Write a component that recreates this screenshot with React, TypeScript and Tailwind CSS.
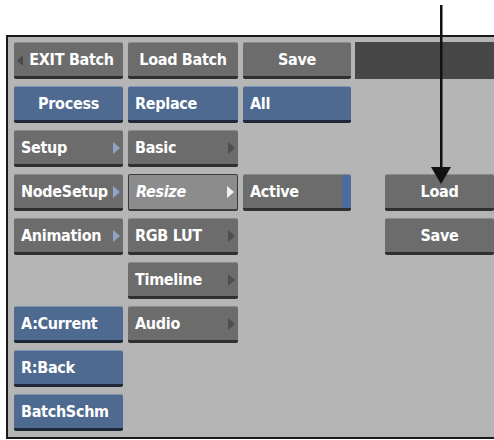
import type { ReactNode } from 'react'

type Variant = 'gray' | 'blue' | 'pressed'

const variants: Record<Variant, string> = {
  gray: 'bg-[#6c6c6c] border-t border-t-[#8a8a8a] border-b-[3px] border-b-[#2f2f2f]',
  blue: 'bg-[#4e6a90] border-t border-t-[#7d94b6] border-b-[3px] border-b-[#1e2838]',
  pressed: 'bg-[#8c8c8c] border border-[#3a3a3a] border-b-2',
}

const label = "text-white text-[16px] font-bold font-stretch-condensed font-['DejaVu_Sans_Condensed','DejaVu_Sans',sans-serif] tracking-[-0.3px]"

function Btn({
  children,
  variant = 'gray',
  center = false,
  arrow,
  italic = false,
  className = '',
}: {
  children?: ReactNode
  variant?: Variant
  center?: boolean
  arrow?: string
  italic?: boolean
  className?: string
}) {
  return (
    <div
      className={`relative flex items-center h-full rounded-[2px] ${label} ${variants[variant]} ${center ? 'justify-center' : 'pl-[7px]'} ${italic ? 'italic' : ''} ${className}`}
    >
      <span>{children}</span>
      {arrow && (
        <svg className="absolute right-[3px] top-[11px]" width="7" height="12" viewBox="0 0 7 12">
          <path d="M0 0 L7 6 L0 12 Z" fill={arrow} />
        </svg>
      )}
    </div>
  )
}

export default function App() {
  return (
    <div className="relative w-[494px] h-[440px] bg-white overflow-hidden pt-[35px] pl-[6px]">
      <div className="h-[404px] bg-[#b5b5b5] border-t-2 border-l-2 border-b-2 border-[#1a1a1a] pt-[5px] pl-[6px]">
        <div className="grid grid-cols-[109px_110px_108px_1fr] auto-rows-[37px] gap-x-[5px] gap-y-[7px]">
          {/* row 1 */}
          <Btn center className="col-start-1 row-start-1 pl-[6px]">
            <svg className="absolute left-[3px] top-[12px]" width="6" height="11" viewBox="0 0 6 11">
              <path d="M6 0 L0 5.5 L6 11 Z" fill="#4a4a4a" />
            </svg>
            EXIT Batch
          </Btn>
          <Btn center className="col-start-2 row-start-1">Load Batch</Btn>
          <Btn center className="col-start-3 row-start-1">Save</Btn>
          <div className="col-start-4 row-start-1 bg-[#474747] -ml-[1px]" />

          {/* row 2 */}
          <Btn variant="blue" center className="col-start-1 row-start-2">Process</Btn>
          <Btn variant="blue" className="col-start-2 row-start-2">Replace</Btn>
          <Btn variant="blue" className="col-start-3 row-start-2">All</Btn>

          {/* row 3 */}
          <Btn arrow="#8ea4c8" className="col-start-1 row-start-3">Setup</Btn>
          <Btn arrow="#4e4e4e" className="col-start-2 row-start-3">Basic</Btn>

          {/* row 4 */}
          <Btn arrow="#8ea4c8" className="col-start-1 row-start-4">NodeSetup</Btn>
          <Btn variant="pressed" italic arrow="#f2f2f2" className="col-start-2 row-start-4">Resize</Btn>
          <div className="col-start-3 row-start-4 flex h-full rounded-[2px] border-t border-t-[#8a8a8a] border-b-[3px] border-b-[#2f2f2f] overflow-hidden">
            <div className={`flex-1 bg-[#6c6c6c] flex items-center pl-[7px] ${label}`}>
              <span>Active</span>
            </div>
            <div className="w-[9px] bg-[#4d6c9e]" />
          </div>
          <div className="col-start-4 row-start-4 pl-[29px]">
            <Btn center>Load</Btn>
          </div>

          {/* row 5 */}
          <Btn arrow="#8ea4c8" className="col-start-1 row-start-5">Animation</Btn>
          <Btn arrow="#4e4e4e" className="col-start-2 row-start-5">RGB LUT</Btn>
          <div className="col-start-4 row-start-5 pl-[29px]">
            <Btn center>Save</Btn>
          </div>

          {/* row 6 */}
          <Btn arrow="#4e4e4e" className="col-start-2 row-start-6">Timeline</Btn>

          {/* row 7 */}
          <Btn variant="blue" className="col-start-1 row-start-7">A:Current</Btn>
          <Btn arrow="#4e4e4e" className="col-start-2 row-start-7">Audio</Btn>

          {/* rows 8-9 */}
          <Btn variant="blue" className="col-start-1 row-start-8">R:Back</Btn>
          <Btn variant="blue" className="col-start-1 row-start-9">BatchSchm</Btn>
        </div>
      </div>

      {/* annotation arrow */}
      <svg className="absolute left-[429px] top-[5px]" width="24" height="182" viewBox="0 0 24 182">
        <rect x="11" y="0" width="2.5" height="164" fill="#111" />
        <path d="M2 162 L22 162 L12 179 Z" fill="#111" />
      </svg>
    </div>
  )
}
